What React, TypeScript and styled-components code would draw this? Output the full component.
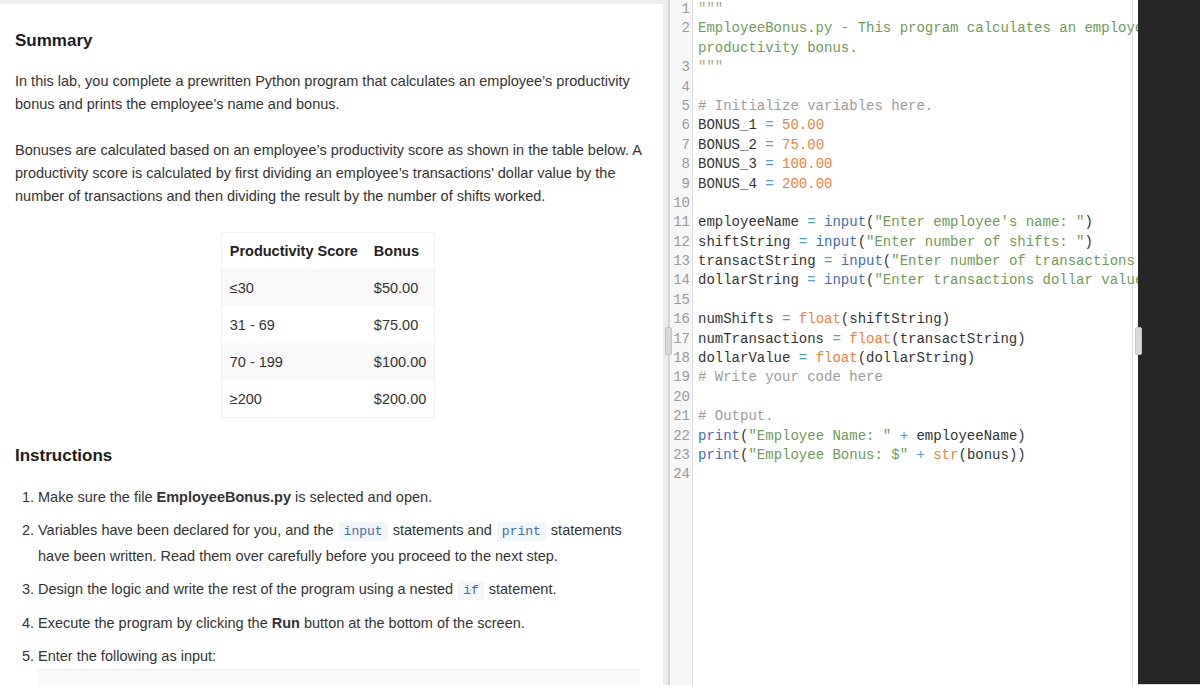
import styled, { createGlobalStyle } from "styled-components";

type TokenKind = "plain" | "doc" | "quote" | "comment" | "num" | "op" | "builtin" | "call" | "str";
type Token = [TokenKind, string];

interface CodeRow {
  no?: number;
  tokens: Token[];
}

const GlobalStyle = createGlobalStyle`
  html, body {
    margin: 0;
    padding: 0;
    background: #ffffff;
  }
  body {
    width: 1200px;
    height: 685px;
    overflow: hidden;
  }
`;

const Page = styled.div`
  display: flex;
  width: 1200px;
  height: 685px;
  overflow: hidden;
`;

const Reading = styled.div`
  flex: none;
  width: 663px;
  height: 685px;
  box-sizing: border-box;
  border-top: 4px solid #ededed;
  padding: 25px 17px 0 15px;
  font-family: "Liberation Sans", Arial, sans-serif;
  font-size: 14.5px;
  color: #333333;
  overflow: hidden;
`;

const Heading = styled.h2<{ gap: number }>`
  margin: 0 0 ${(p) => p.gap}px;
  font-size: 17px;
  line-height: 24px;
  font-weight: 700;
  color: #1c1c1c;
`;

const Para = styled.p`
  margin: 0 0 23px;
  line-height: 23px;
`;

const TableWrap = styled.div`
  display: flex;
  justify-content: center;
  margin: 24px 5px 26px 0;
`;

const Table = styled.table`
  border-collapse: collapse;
  border: 1px solid #f1f1f1;
`;

const HeadCell = styled.th`
  height: 36px;
  padding: 0 8px;
  text-align: left;
  font-weight: 700;
  color: #222222;
`;

const Row = styled.tr<{ shaded: boolean }>`
  background: ${(p) => (p.shaded ? "#f8f8f8" : "#ffffff")};
`;

const Cell = styled.td`
  height: 37px;
  padding: 0 8px;
  color: #333333;
`;

const Steps = styled.ol`
  margin: 0;
  padding: 0 0 0 23px;
`;

const Step = styled.li`
  line-height: 25px;
  margin-bottom: 8px;
`;

const Inline = styled.code`
  font-family: "Liberation Mono", "Courier New", monospace;
  font-size: 13px;
  color: #3d6fa8;
  background: #f3f6f8;
  padding: 2px 5px;
  margin: 0 1px;
`;

const InputBlock = styled.div`
  height: 40px;
  margin-right: 6px;
  background: #f9fafb;
  border-top: 1px solid #e4ecee;
`;

const PaneTrack = styled.div`
  position: relative;
  flex: none;
  width: 5px;
  height: 685px;
  background: #ececec;
  border-right: 2px solid #d6d6d6;
`;

const Thumb = styled.div<{ left: number }>`
  position: absolute;
  top: 327px;
  left: ${(p) => p.left}px;
  width: 5px;
  height: 26px;
  background: #d9d9dd;
  border: 1px solid #c4c4c8;
  border-radius: 2px;
  z-index: 2;
`;

const Editor = styled.div`
  flex: none;
  display: flex;
  width: 468px;
  height: 685px;
  font-family: "Liberation Mono", "Courier New", monospace;
  font-size: 14px;
  line-height: 19.4px;
  overflow: hidden;
`;

const Gutter = styled.div`
  flex: none;
  width: 22px;
  height: 685px;
  background: #f7f7f7;
  border-right: 1px solid #dedede;
  color: #9a9a9a;
  text-align: right;
`;

const GutterScroll = styled.div`
  padding-right: 2px;
`;

const LineNo = styled.div<{ rows: number }>`
  height: ${(p) => p.rows * 19.4}px;
`;

const Code = styled.div`
  flex: 1;
  min-width: 0;
  height: 685px;
  background: linear-gradient(
    to right,
    transparent calc(100% - 6px),
    #dedede calc(100% - 6px),
    #dedede calc(100% - 5px),
    transparent calc(100% - 5px)
  );
  overflow: hidden;
`;

const CodeScroll = styled.div`
  padding-left: 5px;
`;

const CodeLine = styled.div`
  height: 19.4px;
  white-space: pre;
  overflow: hidden;
  color: #333333;
`;

const tokenColor: Record<TokenKind, string> = {
  plain: "#333333",
  doc: "#6e9b57",
  quote: "#aea67f",
  comment: "#9c9c9c",
  num: "#f3803a",
  op: "#4f9fc7",
  builtin: "#3f6db3",
  call: "#f3803a",
  str: "#6e9b57",
};

const Tok = styled.span<{ kind: TokenKind }>`
  color: ${(p) => tokenColor[p.kind]};
`;

const Dark = styled.div`
  position: relative;
  flex: 1;
  height: 685px;
  background: #262626;
  border-bottom: 1px solid #d8d8d8;
  box-sizing: border-box;
`;

const rows: CodeRow[] = [
  { no: 1, tokens: [["quote", '"""']] },
  { no: 2, tokens: [["doc", "EmployeeBonus.py - This program calculates an employee's"]] },
  { tokens: [["doc", "productivity bonus."]] },
  { no: 3, tokens: [["quote", '"""']] },
  { no: 4, tokens: [] },
  { no: 5, tokens: [["comment", "# Initialize variables here."]] },
  { no: 6, tokens: [["plain", "BONUS_1 "], ["op", "="], ["plain", " "], ["num", "50.00"]] },
  { no: 7, tokens: [["plain", "BONUS_2 "], ["op", "="], ["plain", " "], ["num", "75.00"]] },
  { no: 8, tokens: [["plain", "BONUS_3 "], ["op", "="], ["plain", " "], ["num", "100.00"]] },
  { no: 9, tokens: [["plain", "BONUS_4 "], ["op", "="], ["plain", " "], ["num", "200.00"]] },
  { no: 10, tokens: [] },
  {
    no: 11,
    tokens: [["plain", "employeeName "], ["op", "="], ["plain", " "], ["builtin", "input"], ["plain", "("], ["str", "\"Enter employee's name: \""], ["plain", ")"]],
  },
  {
    no: 12,
    tokens: [["plain", "shiftString "], ["op", "="], ["plain", " "], ["builtin", "input"], ["plain", "("], ["str", '"Enter number of shifts: "'], ["plain", ")"]],
  },
  {
    no: 13,
    tokens: [["plain", "transactString "], ["op", "="], ["plain", " "], ["builtin", "input"], ["plain", "("], ["str", '"Enter number of transactions: "'], ["plain", ")"]],
  },
  {
    no: 14,
    tokens: [["plain", "dollarString "], ["op", "="], ["plain", " "], ["builtin", "input"], ["plain", "("], ["str", '"Enter transactions dollar value: "'], ["plain", ")"]],
  },
  { no: 15, tokens: [] },
  { no: 16, tokens: [["plain", "numShifts "], ["op", "="], ["plain", " "], ["call", "float"], ["plain", "(shiftString)"]] },
  { no: 17, tokens: [["plain", "numTransactions "], ["op", "="], ["plain", " "], ["call", "float"], ["plain", "(transactString)"]] },
  { no: 18, tokens: [["plain", "dollarValue "], ["op", "="], ["plain", " "], ["call", "float"], ["plain", "(dollarString)"]] },
  { no: 19, tokens: [["comment", "# Write your code here"]] },
  { no: 20, tokens: [] },
  { no: 21, tokens: [["comment", "# Output."]] },
  {
    no: 22,
    tokens: [["builtin", "print"], ["plain", "("], ["str", '"Employee Name: "'], ["plain", " "], ["op", "+"], ["plain", " employeeName)"]],
  },
  {
    no: 23,
    tokens: [["builtin", "print"], ["plain", "("], ["str", '"Employee Bonus: $"'], ["plain", " "], ["op", "+"], ["plain", " "], ["call", "str"], ["plain", "(bonus))"]],
  },
  { no: 24, tokens: [] },
];

const bonuses = [
  ["≤30", "$50.00"],
  ["31 - 69", "$75.00"],
  ["70 - 199", "$100.00"],
  ["≥200", "$200.00"],
];

function gutterRows() {
  const out: { no: number; rows: number }[] = [];
  rows.forEach((r) => {
    if (r.no !== undefined) out.push({ no: r.no, rows: 1 });
    else out[out.length - 1].rows += 1;
  });
  return out;
}

export default function App() {
  return (
    <>
      <GlobalStyle />
      <Page>
        <Reading>
          <Heading gap={17}>Summary</Heading>
          <Para>
            In this lab, you complete a prewritten Python program that calculates an employee’s productivity
            bonus and prints the employee’s name and bonus.
          </Para>
          <Para>
            Bonuses are calculated based on an employee’s productivity score as shown in the table below. A
            productivity score is calculated by first dividing an employee’s transactions’ dollar value by the
            number of transactions and then dividing the result by the number of shifts worked.
          </Para>

          <TableWrap>
            <Table>
              <thead>
                <tr>
                  <HeadCell>Productivity Score</HeadCell>
                  <HeadCell>Bonus</HeadCell>
                </tr>
              </thead>
              <tbody>
                {bonuses.map(([score, bonus], i) => (
                  <Row key={score} shaded={i % 2 === 0}>
                    <Cell>{score}</Cell>
                    <Cell>{bonus}</Cell>
                  </Row>
                ))}
              </tbody>
            </Table>
          </TableWrap>

          <Heading gap={17}>Instructions</Heading>
          <Steps>
            <Step>
              Make sure the file <b>EmployeeBonus.py</b> is selected and open.
            </Step>
            <Step>
              Variables have been declared for you, and the <Inline>input</Inline> statements and{" "}
              <Inline>print</Inline> statements have been written. Read them over carefully before you proceed to
              the next step.
            </Step>
            <Step>
              Design the logic and write the rest of the program using a nested <Inline>if</Inline> statement.
            </Step>
            <Step>
              Execute the program by clicking the <b>Run</b> button at the bottom of the screen.
            </Step>
            <Step>
              Enter the following as input:
              <InputBlock />
            </Step>
          </Steps>
        </Reading>

        <PaneTrack>
          <Thumb left={2} />
        </PaneTrack>

        <Editor>
          <Gutter>
            <GutterScroll>
              {gutterRows().map((g) => (
                <LineNo key={g.no} rows={g.rows}>
                  {g.no}
                </LineNo>
              ))}
            </GutterScroll>
          </Gutter>
          <Code>
            <CodeScroll>
              {rows.map((r, i) => (
                <CodeLine key={i}>
                  {r.tokens.map(([kind, text], j) => (
                    <Tok key={j} kind={kind}>
                      {text}
                    </Tok>
                  ))}
                </CodeLine>
              ))}
            </CodeScroll>
          </Code>
        </Editor>

        <Dark>
          <Thumb left={-3} />
        </Dark>
      </Page>
    </>
  );
}
